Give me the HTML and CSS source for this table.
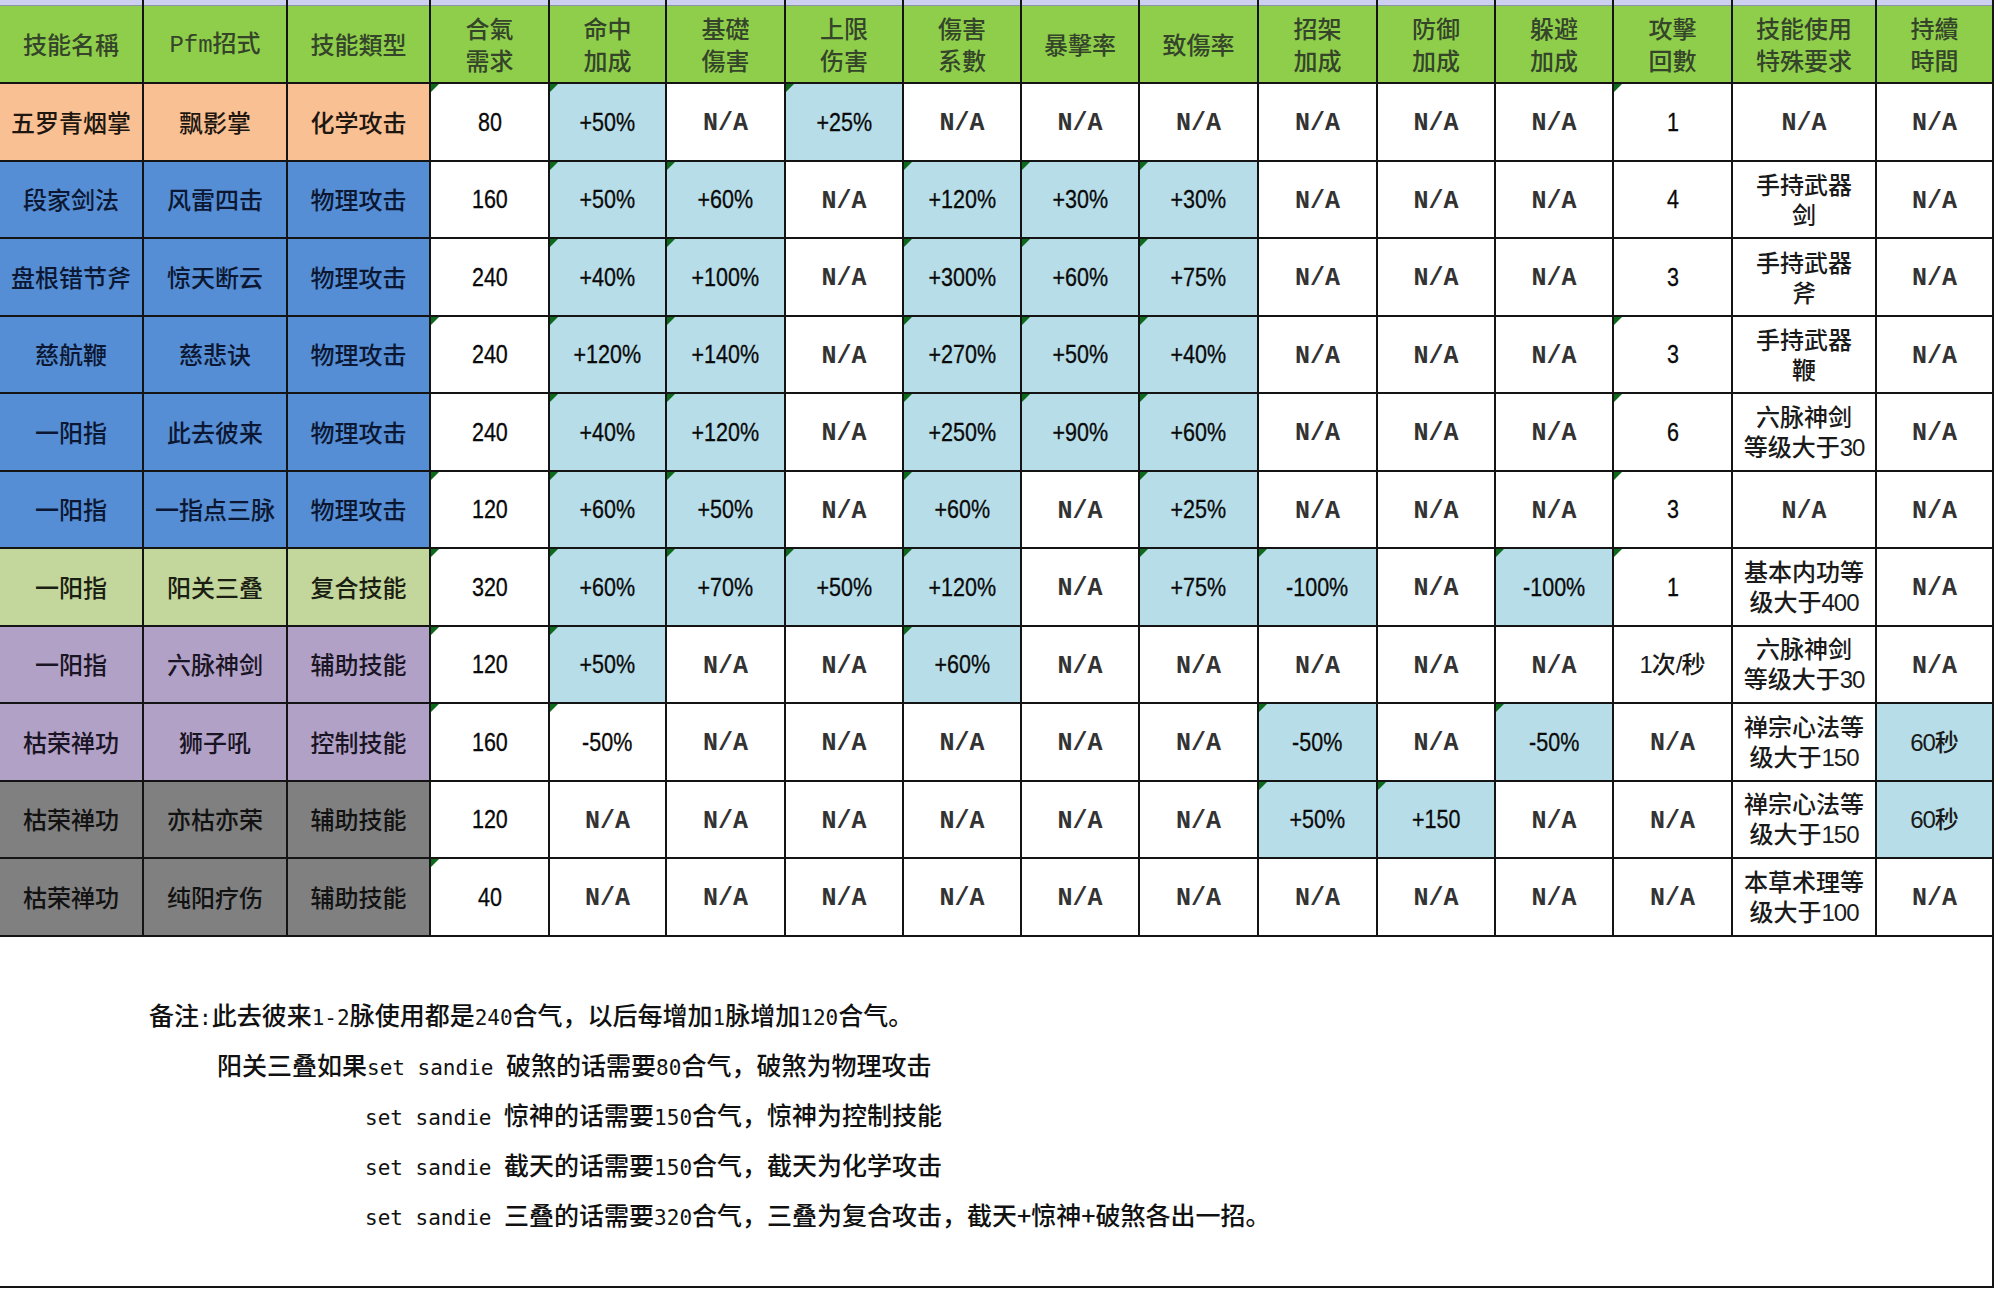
FILE: index.html
```html
<!DOCTYPE html>
<html lang="zh-CN">
<head>
<meta charset="utf-8">
<title>技能表</title>
<link rel="stylesheet" href="styles.css">
</head>
<body>
<div class="sheet">
  <div class="s"></div><div class="s"></div><div class="s"></div><div class="s"></div><div class="s"></div><div class="s"></div><div class="s"></div><div class="s"></div><div class="s"></div><div class="s"></div><div class="s"></div><div class="s"></div><div class="s"></div><div class="s"></div><div class="s"></div><div class="s"></div>

  <div class="c h">技能名稱</div>
  <div class="c h"><span class="in"><span class="mono">Pfm</span>招式</span></div>
  <div class="c h">技能類型</div>
  <div class="c h">合氣<br>需求</div>
  <div class="c h">命中<br>加成</div>
  <div class="c h">基礎<br>傷害</div>
  <div class="c h">上限<br>伤害</div>
  <div class="c h">傷害<br>系數</div>
  <div class="c h">暴擊率</div>
  <div class="c h">致傷率</div>
  <div class="c h">招架<br>加成</div>
  <div class="c h">防御<br>加成</div>
  <div class="c h">躲避<br>加成</div>
  <div class="c h">攻擊<br>回數</div>
  <div class="c h">技能使用<br>特殊要求</div>
  <div class="c h">持續<br>時間</div>

  <!-- row 1 -->
  <div class="c k1">五罗青烟掌</div><div class="c k1">飘影掌</div><div class="c k1">化学攻击</div>
  <div class="c t"><span class="num">80</span></div>
  <div class="c b t"><span class="num">+50%</span></div>
  <div class="c"><span class="na">N/A</span></div>
  <div class="c b t"><span class="num">+25%</span></div>
  <div class="c"><span class="na">N/A</span></div>
  <div class="c"><span class="na">N/A</span></div>
  <div class="c"><span class="na">N/A</span></div>
  <div class="c"><span class="na">N/A</span></div>
  <div class="c"><span class="na">N/A</span></div>
  <div class="c"><span class="na">N/A</span></div>
  <div class="c t"><span class="num">1</span></div>
  <div class="c"><span class="na">N/A</span></div>
  <div class="c"><span class="na">N/A</span></div>

  <!-- row 2 -->
  <div class="c k2">段家剑法</div><div class="c k2">风雷四击</div><div class="c k2">物理攻击</div>
  <div class="c"><span class="num">160</span></div>
  <div class="c b t"><span class="num">+50%</span></div>
  <div class="c b t"><span class="num">+60%</span></div>
  <div class="c"><span class="na">N/A</span></div>
  <div class="c b t"><span class="num">+120%</span></div>
  <div class="c b t"><span class="num">+30%</span></div>
  <div class="c b t"><span class="num">+30%</span></div>
  <div class="c"><span class="na">N/A</span></div>
  <div class="c"><span class="na">N/A</span></div>
  <div class="c"><span class="na">N/A</span></div>
  <div class="c"><span class="num">4</span></div>
  <div class="c"><span class="in">手持武器<br>剑</span></div>
  <div class="c"><span class="na">N/A</span></div>

  <!-- row 3 -->
  <div class="c k2">盘根错节斧</div><div class="c k2">惊天断云</div><div class="c k2">物理攻击</div>
  <div class="c"><span class="num">240</span></div>
  <div class="c b t"><span class="num">+40%</span></div>
  <div class="c b t"><span class="num">+100%</span></div>
  <div class="c"><span class="na">N/A</span></div>
  <div class="c b t"><span class="num">+300%</span></div>
  <div class="c b t"><span class="num">+60%</span></div>
  <div class="c b t"><span class="num">+75%</span></div>
  <div class="c"><span class="na">N/A</span></div>
  <div class="c"><span class="na">N/A</span></div>
  <div class="c"><span class="na">N/A</span></div>
  <div class="c"><span class="num">3</span></div>
  <div class="c"><span class="in">手持武器<br>斧</span></div>
  <div class="c"><span class="na">N/A</span></div>

  <!-- row 4 -->
  <div class="c k2">慈航鞭</div><div class="c k2">慈悲诀</div><div class="c k2">物理攻击</div>
  <div class="c t"><span class="num">240</span></div>
  <div class="c b t"><span class="num">+120%</span></div>
  <div class="c b t"><span class="num">+140%</span></div>
  <div class="c"><span class="na">N/A</span></div>
  <div class="c b t"><span class="num">+270%</span></div>
  <div class="c b t"><span class="num">+50%</span></div>
  <div class="c b t"><span class="num">+40%</span></div>
  <div class="c"><span class="na">N/A</span></div>
  <div class="c"><span class="na">N/A</span></div>
  <div class="c"><span class="na">N/A</span></div>
  <div class="c t"><span class="num">3</span></div>
  <div class="c"><span class="in">手持武器<br>鞭</span></div>
  <div class="c"><span class="na">N/A</span></div>

  <!-- row 5 -->
  <div class="c k2">一阳指</div><div class="c k2">此去彼来</div><div class="c k2">物理攻击</div>
  <div class="c"><span class="num">240</span></div>
  <div class="c b t"><span class="num">+40%</span></div>
  <div class="c b t"><span class="num">+120%</span></div>
  <div class="c"><span class="na">N/A</span></div>
  <div class="c b t"><span class="num">+250%</span></div>
  <div class="c b t"><span class="num">+90%</span></div>
  <div class="c b t"><span class="num">+60%</span></div>
  <div class="c"><span class="na">N/A</span></div>
  <div class="c"><span class="na">N/A</span></div>
  <div class="c"><span class="na">N/A</span></div>
  <div class="c t"><span class="num">6</span></div>
  <div class="c"><span class="in">六脉神剑<br>等级大于<span class="dg">30</span></span></div>
  <div class="c"><span class="na">N/A</span></div>

  <!-- row 6 -->
  <div class="c k2">一阳指</div><div class="c k2">一指点三脉</div><div class="c k2">物理攻击</div>
  <div class="c t"><span class="num">120</span></div>
  <div class="c b t"><span class="num">+60%</span></div>
  <div class="c b t"><span class="num">+50%</span></div>
  <div class="c"><span class="na">N/A</span></div>
  <div class="c b t"><span class="num">+60%</span></div>
  <div class="c"><span class="na">N/A</span></div>
  <div class="c b t"><span class="num">+25%</span></div>
  <div class="c"><span class="na">N/A</span></div>
  <div class="c"><span class="na">N/A</span></div>
  <div class="c"><span class="na">N/A</span></div>
  <div class="c t"><span class="num">3</span></div>
  <div class="c"><span class="na">N/A</span></div>
  <div class="c"><span class="na">N/A</span></div>

  <!-- row 7 -->
  <div class="c k3">一阳指</div><div class="c k3">阳关三叠</div><div class="c k3">复合技能</div>
  <div class="c t"><span class="num">320</span></div>
  <div class="c b t"><span class="num">+60%</span></div>
  <div class="c b t"><span class="num">+70%</span></div>
  <div class="c b t"><span class="num">+50%</span></div>
  <div class="c b t"><span class="num">+120%</span></div>
  <div class="c"><span class="na">N/A</span></div>
  <div class="c b t"><span class="num">+75%</span></div>
  <div class="c b t"><span class="num">-100%</span></div>
  <div class="c"><span class="na">N/A</span></div>
  <div class="c b t"><span class="num">-100%</span></div>
  <div class="c t"><span class="num">1</span></div>
  <div class="c"><span class="in">基本内功等<br>级大于<span class="dg">400</span></span></div>
  <div class="c"><span class="na">N/A</span></div>

  <!-- row 8 -->
  <div class="c k4">一阳指</div><div class="c k4">六脉神剑</div><div class="c k4">辅助技能</div>
  <div class="c t"><span class="num">120</span></div>
  <div class="c b t"><span class="num">+50%</span></div>
  <div class="c"><span class="na">N/A</span></div>
  <div class="c"><span class="na">N/A</span></div>
  <div class="c b t"><span class="num">+60%</span></div>
  <div class="c"><span class="na">N/A</span></div>
  <div class="c"><span class="na">N/A</span></div>
  <div class="c"><span class="na">N/A</span></div>
  <div class="c"><span class="na">N/A</span></div>
  <div class="c"><span class="na">N/A</span></div>
  <div class="c"><span class="in"><span class="dg">1</span>次<span class="dg">/</span>秒</span></div>
  <div class="c"><span class="in">六脉神剑<br>等级大于<span class="dg">30</span></span></div>
  <div class="c"><span class="na">N/A</span></div>

  <!-- row 9 -->
  <div class="c k4">枯荣禅功</div><div class="c k4">狮子吼</div><div class="c k4">控制技能</div>
  <div class="c t"><span class="num">160</span></div>
  <div class="c t"><span class="num">-50%</span></div>
  <div class="c"><span class="na">N/A</span></div>
  <div class="c"><span class="na">N/A</span></div>
  <div class="c"><span class="na">N/A</span></div>
  <div class="c"><span class="na">N/A</span></div>
  <div class="c"><span class="na">N/A</span></div>
  <div class="c b t"><span class="num">-50%</span></div>
  <div class="c"><span class="na">N/A</span></div>
  <div class="c b t"><span class="num">-50%</span></div>
  <div class="c"><span class="na">N/A</span></div>
  <div class="c"><span class="in">禅宗心法等<br>级大于<span class="dg">150</span></span></div>
  <div class="c b"><span class="in"><span class="dg">60</span>秒</span></div>

  <!-- row 10 -->
  <div class="c k5">枯荣禅功</div><div class="c k5">亦枯亦荣</div><div class="c k5">辅助技能</div>
  <div class="c"><span class="num">120</span></div>
  <div class="c"><span class="na">N/A</span></div>
  <div class="c"><span class="na">N/A</span></div>
  <div class="c"><span class="na">N/A</span></div>
  <div class="c"><span class="na">N/A</span></div>
  <div class="c"><span class="na">N/A</span></div>
  <div class="c"><span class="na">N/A</span></div>
  <div class="c b t"><span class="num">+50%</span></div>
  <div class="c b t"><span class="num">+150</span></div>
  <div class="c"><span class="na">N/A</span></div>
  <div class="c"><span class="na">N/A</span></div>
  <div class="c"><span class="in">禅宗心法等<br>级大于<span class="dg">150</span></span></div>
  <div class="c b"><span class="in"><span class="dg">60</span>秒</span></div>

  <!-- row 11 -->
  <div class="c k5">枯荣禅功</div><div class="c k5">纯阳疗伤</div><div class="c k5">辅助技能</div>
  <div class="c t"><span class="num">40</span></div>
  <div class="c"><span class="na">N/A</span></div>
  <div class="c"><span class="na">N/A</span></div>
  <div class="c"><span class="na">N/A</span></div>
  <div class="c"><span class="na">N/A</span></div>
  <div class="c"><span class="na">N/A</span></div>
  <div class="c"><span class="na">N/A</span></div>
  <div class="c"><span class="na">N/A</span></div>
  <div class="c"><span class="na">N/A</span></div>
  <div class="c"><span class="na">N/A</span></div>
  <div class="c"><span class="na">N/A</span></div>
  <div class="c"><span class="in">本草术理等<br>级大于<span class="dg">100</span></span></div>
  <div class="c"><span class="na">N/A</span></div>
</div>

<div class="notes">
  <div class="line l1">备注<span class="en">:</span>此去彼来<span class="en">1-2</span>脉使用都是<span class="en">240</span>合气，以后每增加<span class="en">1</span>脉增加<span class="en">120</span>合气。</div>
  <div class="line l2">阳关三叠如果<span class="en">set sandie </span>破煞的话需要<span class="en">80</span>合气，破煞为物理攻击</div>
  <div class="line l3"><span class="en">set sandie </span>惊神的话需要<span class="en">150</span>合气，惊神为控制技能</div>
  <div class="line l3"><span class="en">set sandie </span>截天的话需要<span class="en">150</span>合气，截天为化学攻击</div>
  <div class="line l3"><span class="en">set sandie </span>三叠的话需要<span class="en">320</span>合气，三叠为复合攻击，截天+惊神+破煞各出一招。</div>
</div>
</body>
</html>
```

FILE: styles.css
```css
html, body {
  margin: 0;
  padding: 0;
  background: #ffffff;
}

body {
  font-family: "Noto Sans CJK SC", "Noto Sans CJK TC", sans-serif;
  color: #161616;
}

.sheet {
  display: grid;
  width: max-content;
  grid-template-columns: 142px 142px 141px 117px 115px 117px 116px 116px 116px 117px 117px 116px 116px 117px 142px 115px;
  grid-template-rows: 4px 76px repeat(11, 75.5px);
  gap: 2px;
  padding: 0 2px 2px 0;
  background: #141414;
}

.s {
  background: #cdd0f1;
  margin-bottom: -2px;
  border-bottom: 1px solid #8e93a6;
}

.c {
  position: relative;
  display: flex;
  align-items: center;
  justify-content: center;
  text-align: center;
  background: #ffffff;
  font-size: 24px;
  line-height: 30px;
  font-weight: 500;
  color: #1a1a1a;
  white-space: nowrap;
}

.in {
  display: block;
}

.h {
  background: #8fce4b;
  color: #34452a;
  line-height: 32px;
}

.k1 { background: #f9c093; color: #1e1610; }
.k2 { background: #558ed5; color: #0c1833; }
.k3 { background: #c3d69b; color: #1b1e12; }
.k4 { background: #b2a1c7; color: #1a1524; }
.k5 { background: #808080; color: #121212; }

.b { background: #b7dde8; }

.t::before {
  content: "";
  position: absolute;
  left: 0;
  top: 0;
  border-style: solid;
  border-width: 8px 8px 0 0;
  border-color: #0d6a1c transparent transparent transparent;
}

.num {
  display: inline-block;
  font-family: "Liberation Sans", sans-serif;
  font-size: 25px;
  font-weight: 400;
  color: #0a0a0a;
  transform: scaleX(0.86);
  -webkit-text-stroke: 0.3px #0a0a0a;
}

.dg {
  font-family: "Liberation Sans", sans-serif;
  font-size: 24px;
  font-weight: 400;
  letter-spacing: -1px;
}

.na {
  display: inline-block;
  padding-top: 5px;
  font-family: "Liberation Mono", monospace;
  font-size: 25px;
  font-weight: 700;
  color: #333333;
}

.mono {
  font-family: "Liberation Mono", monospace;
  font-size: 24px;
  font-weight: 400;
}

.notes {
  box-sizing: border-box;
  width: 1994px;
  height: 351px;
  padding-top: 52px;
  border-right: 2px solid #141414;
  border-bottom: 2px solid #141414;
}

.line {
  height: 50px;
  line-height: 50px;
  font-size: 25px;
  font-weight: 500;
  color: #111111;
  white-space: pre;
}

.l1 { padding-left: 149px; }
.l2 { padding-left: 217px; }
.l3 { padding-left: 365px; }

.en {
  font-family: "DejaVu Sans Mono", monospace;
  font-size: 21px;
  font-weight: 400;
}
```
